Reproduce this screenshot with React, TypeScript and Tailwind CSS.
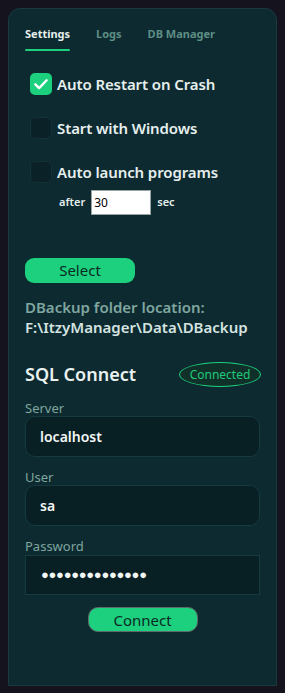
import React, { useState } from "react";

const font = { fontFamily: '"Noto Sans", "Open Sans", sans-serif' };

function CheckRow({ checked, label }: { checked: boolean; label: string }) {
  return (
    <div className="flex h-[22px] items-center gap-[5px] pl-[5px]">
      <div
        className={
          checked
            ? "flex h-[22px] w-[22px] items-center justify-center rounded-[5px] bg-[#1cd07e]"
            : "h-[22px] w-[22px] rounded-[5px] border border-[#123238] bg-[#0a2227]"
        }
      >
        {checked ? (
          <svg width="18" height="18" viewBox="0 0 24 24" fill="none">
            <path d="M4.5 12.5l5 5L19.5 7" stroke="#fff" strokeWidth="3.2" strokeLinecap="round" strokeLinejoin="round" />
          </svg>
        ) : null}
      </div>
      <span className="text-[15px] font-semibold tracking-[-0.1px] text-[#e6efed]">{label}</span>
    </div>
  );
}

export default function App() {
  const [tab] = useState("Settings");
  const tabs = ["Settings", "Logs", "DB Manager"];

  return (
    <div className="min-h-[693px] w-[285px] bg-[#14131e] px-2 pt-2 pb-[7px]" style={font}>
      <div className="flex h-[678px] flex-col rounded-t-[12px] border border-[#1a3a40] bg-[#0c2a30] px-4">
        {/* Tabs */}
        <div className="flex gap-[26px] pt-[17px]">
          {tabs.map((t) => (
            <div key={t} className="flex flex-col">
              <span
                className={
                  t === tab
                    ? "text-[11px] font-bold leading-[16px] text-[#e6efed]"
                    : "text-[11px] font-bold leading-[16px] text-[#5f8e86]"
                }
              >
                {t}
              </span>
              {t === tab ? <div className="mt-[7px] h-[2px] rounded-full bg-[#1cd07e]" /> : null}
            </div>
          ))}
        </div>

        {/* Options */}
        <div className="mt-[22px] flex flex-col gap-[22px]">
          <CheckRow checked label="Auto Restart on Crash" />
          <CheckRow checked={false} label="Start with Windows" />
          <CheckRow checked={false} label="Auto launch programs" />
        </div>
        <div className="mt-[7px] flex items-center pl-[34px]">
          <span className="text-[11px] font-semibold text-[#e6efed]">after</span>
          <input
            readOnly
            value="30"
            className="ml-[6px] h-[25px] w-[60px] border border-[#9aa3a3] bg-white px-[2px] text-[12px] text-black outline-none"
          />
          <span className="ml-[6px] text-[11px] font-semibold text-[#e6efed]">sec</span>
        </div>

        {/* Backup folder */}
        <button className="mt-[43px] h-[25px] w-[110px] rounded-[9px] bg-[#1cd07e] text-[15px] leading-[25px] text-[#0b2a24]">
          Select
        </button>
        <p className="mt-[14px] text-[15px] font-semibold leading-[20px] text-[#7fa69f]">DBackup folder location:</p>
        <p className="text-[15px] font-semibold leading-[20px] text-[#d5e3e0]">F:\ItzyManager\Data\DBackup</p>

        {/* SQL */}
        <div className="mt-[24px] flex items-center justify-between">
          <span className="text-[18px] font-semibold text-[#eaf2f0]">SQL Connect</span>
          <span className="mr-[-1px] flex h-[25px] w-[82px] items-center justify-center rounded-[50%] border border-[#1cd07e] bg-[#0f3129] text-[12px] text-[#22c97c]">
            Connected
          </span>
        </div>

        <label className="mt-[12px] text-[13px] leading-[16px] text-[#7fa69f]">Server</label>
        <div className="flex h-[41px] items-center rounded-[10px] border border-[#153a40] bg-[#081f23] px-[14px] text-[14px] font-semibold text-[#f2f6f5]">
          localhost
        </div>

        <label className="mt-[12px] text-[13px] leading-[16px] text-[#7fa69f]">User</label>
        <div className="flex h-[41px] items-center rounded-[10px] border border-[#153a40] bg-[#081f23] px-[14px] text-[14px] font-semibold text-[#f2f6f5]">
          sa
        </div>

        <label className="mt-[12px] text-[13px] leading-[16px] text-[#7fa69f]">Password</label>
        <div className="mt-[1px] flex h-[40px] items-center border border-[#153a40] bg-[#081f23] px-[15px] text-[13px] tracking-[-0.3px] text-[#f2f6f5]">
          ●●●●●●●●●●●●●●
        </div>

        <div className="mt-[12px] flex justify-center">
          <button className="h-[25px] w-[110px] rounded-[10px] border border-[#5d6b6a] bg-[#1cd07e] text-[15px] leading-[22px] text-[#0b2a24]">
            Connect
          </button>
        </div>
      </div>
    </div>
  );
}
